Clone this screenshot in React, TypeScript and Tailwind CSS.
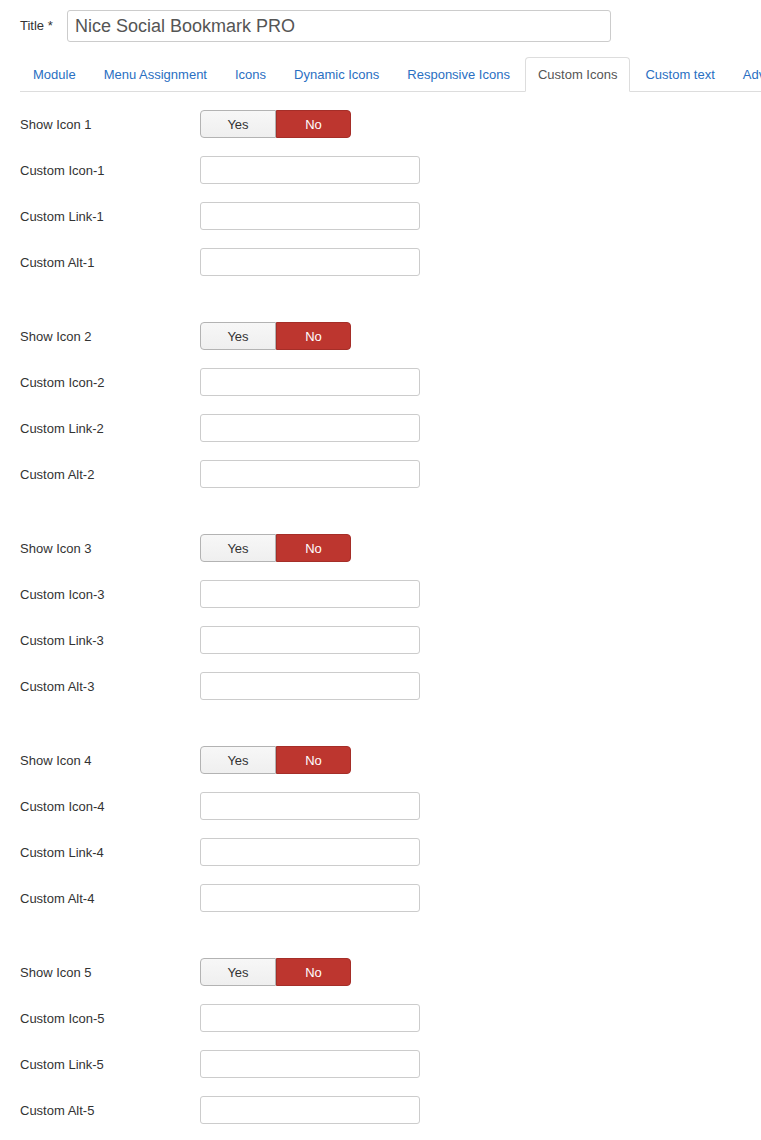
import React from "react";

const tabs = [
  "Module",
  "Menu Assignment",
  "Icons",
  "Dynamic Icons",
  "Responsive Icons",
  "Custom Icons",
  "Custom text",
  "Advanced",
];

function Toggle() {
  return (
    <div className="flex h-[28px] w-[151px]">
      <div className="flex w-[76px] items-center justify-center rounded-l-[4px] border border-[#b3b3b3] bg-gradient-to-b from-[#f7f7f7] to-[#efefef] pt-[1px] text-[13px] text-[#333]">
        Yes
      </div>
      <div className="flex w-[75px] items-center justify-center rounded-r-[4px] border border-[#a52e28] bg-[#bd362f] pt-[1px] text-[13px] text-white">
        No
      </div>
    </div>
  );
}

function Field({ label, children }: { label: string; children: React.ReactNode }) {
  return (
    <div className="mb-[18px] flex items-center">
      <div className="w-[180px] pt-[2px] text-[13px] text-[#333]">{label}</div>
      {children}
    </div>
  );
}

function TextInput() {
  return <div className="h-[28px] w-[220px] rounded-[3px] border border-[#ccc] bg-white" />;
}

export default function App() {
  return (
    <div
      className="min-h-[1140px] overflow-hidden bg-white px-[20px] pt-[10px]"
      style={{ fontFamily: '"Liberation Sans", Arial, sans-serif' }}
    >
      <div className="flex items-start">
        <div className="w-[47px] pt-[6px] text-[13px] text-[#333]">Title *</div>
        <div className="flex h-[32px] w-[544px] items-center rounded-[3px] border border-[#ccc] pl-[7px] text-[18px] text-[#555]">
          Nice Social Bookmark PRO
        </div>
      </div>

      <div className="mt-[15px] mr-[-20px] flex whitespace-nowrap border-b border-[#ddd]">
        {tabs.map((t) => {
          const active = t === "Custom Icons";
          return (
            <div
              key={t}
              className={
                active
                  ? "-mb-px mr-[2px] rounded-t-[4px] border border-[#ddd] border-b-white bg-white px-[12px] pt-[8px] pb-[7px] text-[13px] leading-[18px] text-[#555]"
                  : "-mb-px mr-[2px] border border-transparent px-[12px] pt-[8px] pb-[7px] text-[13px] leading-[18px] text-[#2a6fc2]"
              }
            >
              {t}
            </div>
          );
        })}
      </div>

      <div className="pt-[18px]">
        {[1, 2, 3, 4, 5].map((n) => (
          <div key={n} className="pb-[28px]">
            <Field label={`Show Icon ${n}`}>
              <Toggle />
            </Field>
            <Field label={`Custom Icon-${n}`}>
              <TextInput />
            </Field>
            <Field label={`Custom Link-${n}`}>
              <TextInput />
            </Field>
            <Field label={`Custom Alt-${n}`}>
              <TextInput />
            </Field>
          </div>
        ))}
      </div>
    </div>
  );
}
